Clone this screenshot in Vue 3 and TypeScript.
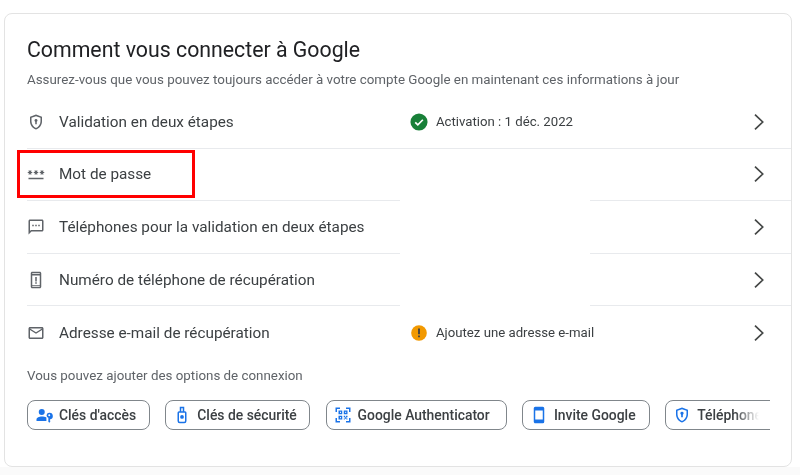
<script setup lang="ts">
interface Row { label: string; icon: string; status?: string; tone?: string }
interface Chip { label: string; icon: string; width: number }

const icons: Record<string, string> = {
  shield: 'M12 2 4 5v6.09c0 5.05 3.41 9.76 8 10.91 4.59-1.15 8-5.86 8-10.91V5l-8-3zm6 9.09c0 4-2.55 7.7-6 8.83-3.45-1.13-6-4.82-6-8.83V6.31l6-2.12 6 2.12v4.78zM12 8a2 2 0 0 0-1 3.73V15h2v-3.27A2 2 0 0 0 12 8z',
  password: 'M2 17h20v2H2v-2zm1.15-4.05L4 11.47l.85 1.48 1.3-.75-.85-1.48H7v-1.5H5.3l.85-1.47L4.85 7 4 8.47 3.15 7l-1.3.75.85 1.47H1v1.5h1.7l-.85 1.48 1.3.75zm6.7-.75 1.3.75.85-1.48.85 1.48 1.3-.75-.85-1.48H15v-1.5h-1.7l.85-1.47-1.3-.75L12 8.47 11.15 7l-1.3.75.85 1.47H9v1.5h1.7l-.85 1.48zM23 9.22h-1.7l.85-1.47-1.3-.75L20 8.47 19.15 7l-1.3.75.85 1.47H17v1.5h1.7l-.85 1.48 1.3.75.85-1.48.85 1.48 1.3-.75-.85-1.48H23v-1.5z',
  sms: 'M20 2H4c-1.1 0-2 .9-2 2v18l4-4h14c1.1 0 2-.9 2-2V4c0-1.1-.9-2-2-2zm0 14H5.17L4 17.17V4h16v12zM7 9h2v2H7V9zm4 0h2v2h-2V9zm4 0h2v2h-2V9z',
  phone: 'M17 1H7c-1.1 0-2 .9-2 2v18c0 1.1.9 2 2 2h10c1.1 0 2-.9 2-2V3c0-1.1-.9-2-2-2zm0 2v1H7V3h10zm0 3v13H7V6h10zm0 15H7v-1h10v1zM11 8h2v6h-2V8zm0 7h2v2h-2v-2z',
  mail: 'M20 4H4c-1.1 0-2 .9-2 2v12c0 1.1.9 2 2 2h16c1.1 0 2-.9 2-2V6c0-1.1-.9-2-2-2zm0 14H4V8l8 5 8-5v10zm-8-7L4 6h16l-8 5z',
  passkey: 'M9 12a4 4 0 1 0 0-8 4 4 0 0 0 0 8zM9 14c-3.3 0-7 1.6-7 4v2h13.2v-4.6C13.8 14.5 11 14 9 14zM19 9a3.5 3.5 0 0 0-1.2 6.8V21l1.2 1.2 1.6-1.6-1-1 1-1-.8-.9a3.5 3.5 0 0 0-.8-8.7zm0 2a1.3 1.3 0 1 1 0 2.6 1.3 1.3 0 0 1 0-2.6z',
  key: 'M9 1h6v6h1a2 2 0 0 1 2 2v11a3 3 0 0 1-3 3H9a3 3 0 0 1-3-3V9a2 2 0 0 1 2-2h1V1zm2 2v4h2V3h-2zM8 9v11a1 1 0 0 0 1 1h6a1 1 0 0 0 1-1V9H8zm4 3a2.5 2.5 0 1 1 0 5 2.5 2.5 0 0 1 0-5z',
  qr: 'M2 2h6v2H4v4H2V2zm14 0h6v6h-2V4h-4V2zM2 16h2v4h4v2H2v-6zm18 0h2v6h-6v-2h4v-4zM6 6h5v5H6V6zm2 1.8v1.4h1.2V7.800H8zM13 6h5v5h-5V6zm2 1.800v1.400h1.200V7.800H15zM6 13h5v5H6v-5zm2 1.800v1.400h1.200v-1.400H8zM13 13h2v2h-2v-2zm3 0h2v2h-2v-2zm-1.500 2h2v2h-2v-2zM13 16.500h1.500V18H13v-1.500zm3.500 0H18V18h-1.500v-1.500z',
  device: 'M17 1H7a2 2 0 0 0-2 2v18c0 1.100.9 2 2 2h10a2 2 0 0 0 2-2V3a2 2 0 0 0-2-2zm0 17H7V6h10v12z',
  shieldBlue: 'M12 2 4 5v6.090c0 5.050 3.410 9.760 8 10.910 4.590-1.150 8-5.860 8-10.910V5l-8-3zm6 9.090c0 4-2.550 7.700-6 8.830-3.450-1.130-6-4.820-6-8.830V6.310l6-2.120 6 2.120v4.780zM12 7.500a2.200 2.200 0 0 0-1.100 4.100V15h2.200v-3.400A2.200 2.200 0 0 0 12 7.500z',
}

const rows: Row[] = [
  { label: 'Validation en deux étapes', icon: 'shield', status: 'Activation : 1 déc. 2022', tone: 'ok' },
  { label: 'Mot de passe', icon: 'password' },
  { label: 'Téléphones pour la validation en deux étapes', icon: 'sms' },
  { label: 'Numéro de téléphone de récupération', icon: 'phone' },
  { label: 'Adresse e-mail de récupération', icon: 'mail', status: 'Ajoutez une adresse e-mail', tone: 'warn' },
]

const chips: Chip[] = [
  { label: "Clés d'accès", icon: 'passkey', width: 123 },
  { label: 'Clés de sécurité', icon: 'key', width: 145 },
  { label: 'Google Authenticator', icon: 'qr', width: 181 },
  { label: 'Invite Google', icon: 'device', width: 128 },
  { label: 'Téléphone', icon: 'shieldBlue', width: 140 },
]
</script>

<template>
  <main class="page">
    <section class="card">
      <h1 class="title">Comment vous connecter à Google</h1>
      <p class="subtitle">Assurez-vous que vous pouvez toujours accéder à votre compte Google en maintenant ces informations à jour</p>

      <ul class="rows">
        <li v-for="row in rows" :key="row.label" class="row">
          <span class="lead">
            <svg class="row-icon" viewBox="0 0 24 24"><path :d="icons[row.icon]" /></svg>
            <span class="label">{{ row.label }}</span>
          </span>
          <span class="status">
            <template v-if="row.tone === 'ok'">
              <svg class="status-icon" viewBox="0 0 20 20">
                <circle cx="10" cy="10" r="9.500" fill="#188038" />
                <path d="M5.800 10.300 8.700 13.100 14.300 7.500" fill="none" stroke="#fff" stroke-width="1.900" />
              </svg>
              <span>{{ row.status }}</span>
            </template>
            <template v-else-if="row.tone === 'warn'">
              <svg class="status-icon" viewBox="0 0 20 20">
                <circle cx="10" cy="10" r="8.700" fill="#f29900" />
                <path d="M9 5h2v6.500H9zM9 12.800h2v2H9z" fill="#3c4043" />
              </svg>
              <span>{{ row.status }}</span>
            </template>
          </span>
          <svg class="chevron" viewBox="0 0 10 16">
            <path d="M1 .7 8.700 8 1 15.300" fill="none" stroke="#444746" stroke-width="1.700" />
          </svg>
        </li>
      </ul>

      <p class="hint">Vous pouvez ajouter des options de connexion</p>

      <div class="chips">
        <span v-for="chip in chips" :key="chip.label" class="chip" :style="{ width: chip.width + 'px' }">
          <svg class="chip-icon" viewBox="0 0 24 24"><path :d="icons[chip.icon]" /></svg>
          <span class="chip-label">{{ chip.label }}</span>
        </span>
      </div>

      <div class="redaction"></div>
      <div class="highlight"></div>
    </section>
  </main>
</template>

<style scoped>
.page {
  width: 800px;
  height: 475px;
  padding: 13px 8px 8px 4px;
  box-sizing: border-box;
  background: linear-gradient(#fff 467px, #fafafa 467px);
  font-family: Roboto, "Liberation Sans", sans-serif;
  overflow: hidden;
  filter: blur(0.4px);
}
.card {
  position: relative;
  height: 454px;
  box-sizing: border-box;
  padding: 0 0 0 22px;
  background: #fff;
  border: 1px solid #e3e3e3;
  border-radius: 8px;
}
.title {
  margin: 23px 0 0;
  font-size: 21.300px;
  line-height: 26px;
  font-weight: 400;
  color: #202124;
}
.subtitle {
  margin: 8px 0 0;
  font-size: 13.370px;
  line-height: 18px;
  color: #5f6368;
}
.rows {
  list-style: none;
  margin: 7px 0 0;
  padding: 0;
}
.row {
  height: 52.600px;
  box-sizing: border-box;
  display: flex;
  align-items: center;
  border-bottom: 1px solid #e8eaed;
}
.row:last-child {
  border-bottom: none;
}
.lead {
  width: 383px;
  display: flex;
  align-items: center;
  gap: 14px;
}
.row-icon {
  width: 18px;
  height: 18px;
  fill: #5f6368;
}
.label {
  font-size: 15.300px;
  color: #3c4043;
}
.status {
  width: 344px;
  display: flex;
  align-items: center;
  gap: 8px;
  font-size: 13.200px;
  color: #3c4043;
}
.status-icon {
  width: 18px;
  height: 18px;
}
.chevron {
  width: 10px;
  height: 16px;
}
.hint {
  margin: 8px 0 0;
  font-size: 13.350px;
  line-height: 18px;
  color: #5f6368;
}
.chips {
  display: flex;
  gap: 15.300px;
  width: 743px;
  margin-top: 15px;
  overflow: hidden;
}
.chip {
  flex: none;
  height: 30px;
  box-sizing: border-box;
  display: flex;
  align-items: center;
  gap: 6px;
  padding-left: 7px;
  border: 1px solid #80868b;
  border-radius: 8px;
  font-size: 13.900px;
  font-weight: 500;
  color: #3c4043;
}
.chip:last-child .chip-label {
  -webkit-mask-image: linear-gradient(to right, #000 38px, transparent 62px);
  mask-image: linear-gradient(to right, #000 38px, transparent 62px);
}
.chip-icon {
  width: 18px;
  height: 18px;
  fill: #1a73e8;
}
.redaction {
  position: absolute;
  left: 395px;
  top: 136px;
  width: 190px;
  height: 159px;
  background: #fff;
}
.highlight {
  position: absolute;
  left: 12px;
  top: 136px;
  width: 178px;
  height: 48px;
  box-sizing: border-box;
  border: 3px solid #f00;
}
</style>
